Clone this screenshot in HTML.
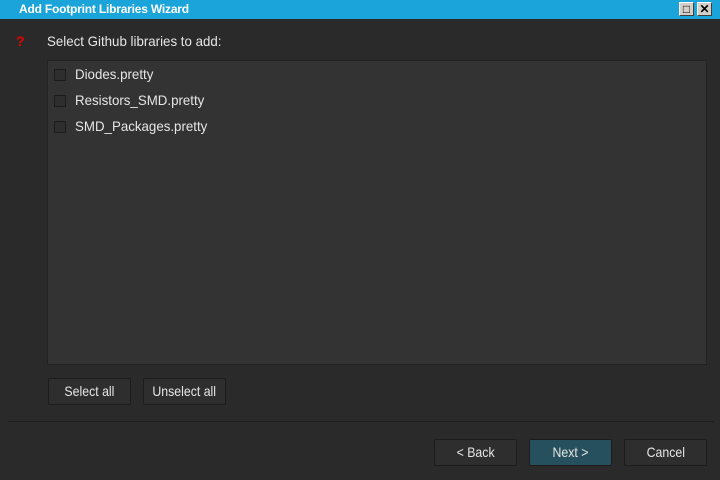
<!DOCTYPE html>
<html><head><style>
body{margin:0;width:720px;height:480px;background:#2a2a2a;font-family:"Liberation Sans",sans-serif;color:#e6e6e6;position:relative;overflow:hidden}
.abs{position:absolute}
.tb{left:0;top:0;width:720px;height:19px;background:#1ba4da}
.tt{left:19px;top:2px;font-size:12px;font-weight:bold;color:#fff;letter-spacing:-0.2px}
.wb{top:2px;width:15px;height:14px;background:#d4d0c8;border:1px solid #fff;border-right-color:#404040;border-bottom-color:#404040;box-sizing:border-box;font-size:12px;font-weight:bold;color:#000;text-align:center;line-height:12px}
.list{left:47px;top:60px;width:660px;height:305px;background:#333;border:1px solid #222;box-sizing:border-box}
.cb{width:10px;height:10px;border:1px solid #1c1c1c;background:#2e2e2e;left:54px}
.it{left:75px;font-size:14px;transform:scaleX(0.95);transform-origin:left}
.btn{height:27px;background:#2e2e2e;border:1px solid #1c1c1c;box-sizing:border-box;border-radius:2px;text-align:center;line-height:25px;font-size:14px;color:#e6e6e6}
.btn span{display:inline-block;transform:scaleX(0.88)}
</style></head><body>
<div class="abs tb"></div>
<div class="abs tt">Add Footprint Libraries Wizard</div>
<div class="abs wb" style="left:679px">□</div>
<div class="abs wb" style="left:697px">✕</div>
<div class="abs" style="left:16px;top:33px;color:#e00;font-weight:bold;font-size:14px">?</div>
<div class="abs" style="left:47px;top:33px;font-size:14px;transform:scaleX(0.95);transform-origin:left">Select Github libraries to add:</div>
<div class="abs list"></div>
<div class="abs cb" style="top:69px"></div><div class="abs it" style="top:66px">Diodes.pretty</div>
<div class="abs cb" style="top:95px"></div><div class="abs it" style="top:92px">Resistors_SMD.pretty</div>
<div class="abs cb" style="top:121px"></div><div class="abs it" style="top:118px">SMD_Packages.pretty</div>
<div class="abs btn" style="left:48px;top:378px;width:83px"><span>Select all</span></div>
<div class="abs btn" style="left:143px;top:378px;width:83px"><span>Unselect all</span></div>
<div class="abs" style="left:8px;top:421px;width:706px;height:1px;background:#1f1f1f"></div>
<div class="abs btn" style="left:434px;top:439px;width:83px"><span>&lt; Back</span></div>
<div class="abs btn" style="left:529px;top:439px;width:83px;background:#27505e"><span>Next &gt;</span></div>
<div class="abs btn" style="left:624px;top:439px;width:83px"><span>Cancel</span></div>
</body></html>
